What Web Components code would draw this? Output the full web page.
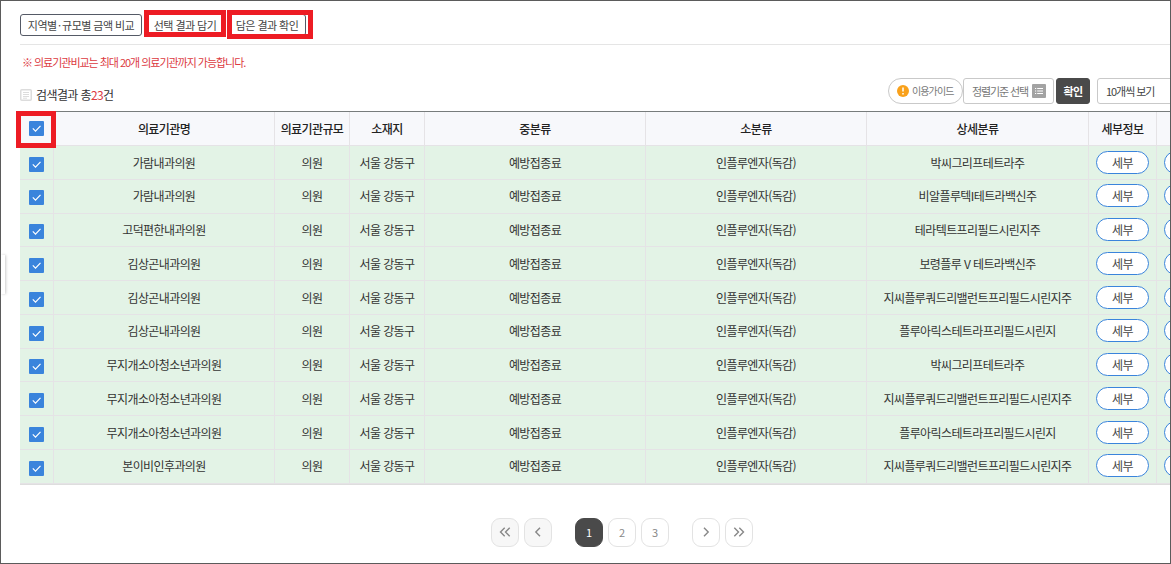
<!DOCTYPE html>
<html lang="ko">
<head>
<meta charset="utf-8">
<title>의료기관 비교</title>
<style>
    body {
        margin: 0;
        font-family: "Noto Sans CJK KR", sans-serif;
        font-size: 12px;
        letter-spacing: -.6px;
        color: #333;
    }
    .dot { margin: 0 1.5px; }
</style>
</head>
<body>
<app-frame>
    <side-tab></side-tab>
    <action-bar>
        <line-button style="width: 122px">지역별<span class="dot">·</span>규모별 금액 비교</line-button>
        <line-button style="width: 79px" marked>선택 결과 담기</line-button>
        <line-button style="width: 79px" marked="tall">담은 결과 확인</line-button>
    </action-bar>
    <notice-text>※ 의료기관비교는 최대 20개 의료기관까지 가능합니다.</notice-text>
    <result-bar total="23"></result-bar>
    <price-table></price-table>
    <page-nav current="1" pages="3"></page-nav>
</app-frame>

<script>
const define = (name, html, setup) => customElements.define(name, class extends HTMLElement {
    constructor() {
        super();
        this.attachShadow({ mode: 'open' });
        this.shadowRoot.innerHTML = html;
    }
    connectedCallback() {
        if (setup) setup(this, this.shadowRoot);
    }
});

define('app-frame', `
    <style>
        :host {
            display: flex;
            flex-direction: column;
            box-sizing: border-box;
            position: relative;
            width: 1171px;
            height: 564px;
            padding-left: 19px;
            border: 1px solid #5b5b5b;
            background: #fff;
            overflow: hidden;
        }
    </style>
    <slot></slot>
`);

define('side-tab', `
    <style>
        :host {
            position: absolute;
            left: 0;
            top: 254px;
            width: 4px;
            height: 39px;
            background: #fff;
            box-shadow: 1px 0 3px rgba(0, 0, 0, .2);
        }
    </style>
`);

define('action-bar', `
    <style>
        :host {
            display: flex;
            flex: none;
            align-items: flex-start;
            box-sizing: border-box;
            height: 44px;
            gap: 3px;
            padding-top: 13px;
            border-bottom: 1px solid #e5e5e5;
        }
    </style>
    <slot></slot>
`);

define('line-button', `
    <style>
        :host {
            display: block;
            position: relative;
            box-sizing: border-box;
            height: 22px;
            border: 1px solid #555a66;
            border-radius: 3px;
            line-height: 20px;
            font-size: 11px;
            letter-spacing: -.55px;
            text-align: center;
            white-space: nowrap;
            color: #444;
        }
        :host([marked]) { text-indent: 1px; }
        i { display: none; }
        :host([marked]) i {
            display: block;
            position: absolute;
            box-sizing: border-box;
            left: -2px;
            top: -5px;
            width: 82px;
            height: 27px;
            border: 5px solid #ed1c24;
        }
        :host([marked=tall]) i {
            width: 86px;
            height: 29px;
            left: -1px;
        }
    </style>
    <slot></slot><i></i>
`);

define('notice-text', `
    <style>
        :host {
            display: block;
            flex: none;
            height: 33px;
            padding-left: 2px;
            line-height: 34px;
            font-size: 11px;
            letter-spacing: -1.03px;
            color: #dc3a3f;
        }
    </style>
    <slot></slot>
`);

define('result-bar', `
    <style>
        :host {
            display: flex;
            flex: none;
            height: 33px;
            width: 1300px;
        }
        .count {
            display: flex;
            align-items: center;
            gap: 4px;
            width: 868px;
            height: 34px;
        }
        .count span { padding-bottom: 2px; }
        .count b { font-weight: 400; color: #dc3a3f; }
        .box {
            display: flex;
            align-items: center;
            box-sizing: border-box;
            height: 26px;
            border: 1px solid #c9c9c9;
            border-radius: 3px;
            white-space: nowrap;
            font-size: 11px;
            color: #777;
        }
        .box span { padding-bottom: 1px; }
        .guide {
            width: 75px;
            padding-left: 8px;
            gap: 3px;
            border-radius: 13px;
            font-size: 10px;
            letter-spacing: -.9px;
        }
        .sort {
            width: 91px;
            padding-left: 8px;
            gap: 4px;
            letter-spacing: -1.1px;
        }
        .ok {
            width: 34px;
            margin: 0 7px 0 2px;
            justify-content: center;
            border-color: #4a4a4a;
            background: #4a4a4a;
            font-weight: 700;
            color: #fff;
        }
        .size {
            width: 110px;
            padding-left: 8px;
            letter-spacing: -1.05px;
            color: #444;
        }
    </style>
    <div class="count">
        <svg width="12" height="12" viewBox="0 0 12 12" fill="none" stroke="#dcdcdc">
            <rect x=".75" y=".75" width="10.5" height="10.5" rx="1" stroke-width="1.5"/>
            <path d="M3 3.5h6M3 5.5h6M3 7.5h6M3 9.2h4"/>
        </svg>
        <span>검색결과 총<b></b>건</span>
    </div>
    <div class="box guide">
        <svg width="12" height="12" viewBox="0 0 12 12">
            <circle cx="6" cy="6" r="6" fill="#f9a11b"/>
            <path d="M6 2.6v4M6 8v1.4" stroke="#fff" stroke-width="1.5"/>
        </svg>
        <span>이용가이드</span>
    </div>
    <div class="box sort">
        <span>정렬기준 선택</span>
        <svg width="14" height="14" viewBox="0 0 14 14">
            <rect width="14" height="14" rx="1" fill="#a3a3a3"/>
            <path d="M3 4.5h1.2M5.2 4.5H11M3 7h1.2M5.2 7H11M3 9.5h1.2M5.2 9.5H11" stroke="#fff"/>
        </svg>
    </div>
    <div class="box ok"><span>확인</span></div>
    <div class="box size"><span>10개씩 보기</span></div>
`, (el, root) => {
    root.querySelector('b').textContent = el.getAttribute('total');
});

define('check-box', `
    <style>
        :host {
            display: block;
            width: 15px;
            height: 15px;
            border-radius: 1px;
            background: #3a84dc;
        }
        svg { display: block; }
    </style>
    <svg width="15" height="15" viewBox="0 0 15 15" fill="none" stroke="#fff" stroke-width="1.2">
        <path d="M3.8 7.4l2.7 2.7 5-5.3"/>
    </svg>
`);

define('pill-button', `
    <style>
        :host {
            display: block;
            flex: none;
            box-sizing: border-box;
            width: 53px;
            height: 23px;
            border: 1px solid #3a84dc;
            border-radius: 12px;
            background: #fff;
            line-height: 21px;
            text-align: center;
            color: #444;
        }
    </style>
    <slot></slot>
`);

const heads = ['의료기관명', '의료기관규모', '소재지', '중분류', '소분류', '상세분류', '세부정보'];

// [의료기관명, 상세분류]; the other columns are the same in every row
const items = [
    ['가람내과의원', '박씨그리프테트라주'],
    ['가람내과의원', '비알플루텍I테트라백신주'],
    ['고덕편한내과의원', '테라텍트프리필드시린지주'],
    ['김상곤내과의원', '보령플루 V 테트라백신주'],
    ['김상곤내과의원', '지씨플루쿼드리밸런트프리필드시린지주'],
    ['김상곤내과의원', '플루아릭스테트라프리필드시린지'],
    ['무지개소아청소년과의원', '박씨그리프테트라주'],
    ['무지개소아청소년과의원', '지씨플루쿼드리밸런트프리필드시린지주'],
    ['무지개소아청소년과의원', '플루아릭스테트라프리필드시린지'],
    ['본이비인후과의원', '지씨플루쿼드리밸런트프리필드시린지주']
];

define('price-table', `
    <style>
        :host {
            display: block;
            flex: none;
            width: 1250px;
            border-top: 1px solid #777c7c;
            border-bottom: 1px solid #dedede;
        }
        .row {
            display: grid;
            grid-template-columns: 34px 221px 75px 75px 221px 221px 222px 68px 113px;
            height: 33.78px;
            background: #e3f3e6;
            color: #333;
        }
        .head {
            position: relative;
            height: 34px;
            background: #f7f8fb;
            font-weight: 500;
            color: #222;
        }
        .row > div {
            display: flex;
            align-items: center;
            justify-content: center;
            box-sizing: border-box;
            padding-bottom: .6px;
            border-right: 1px solid #e5e3e6;
            border-bottom: 1px solid #e5e3e6;
            white-space: nowrap;
        }
        .head > div { padding-bottom: 0; }
        .row > div:last-child { justify-content: flex-start; padding-left: 7px; }
        .row check-box { margin-top: 4.2px; }
        .head check-box { margin-top: 0; }
        .mark {
            position: absolute;
            box-sizing: border-box;
            left: -4px;
            top: -1px;
            width: 40px;
            height: 37px;
            border: 5px solid #ed1c24;
        }
    </style>
    <div class="table"></div>
`, (el, root) => {
    const row = (cells, cls = '') => `<div class="row ${cls}">${
        cells.map(c => `<div>${c}</div>`).join('')
    }${cls ? '<i class="mark"></i>' : ''}</div>`;
    const check = '<check-box></check-box>';
    const pill = '<pill-button>세부</pill-button>';

    root.querySelector('.table').innerHTML =
        row([check, ...heads, ''], 'head') +
        items.map(([name, detail]) => row([
            check, name, '의원', '서울 강동구', '예방접종료', '인플루엔자(독감)', detail, pill, '<pill-button></pill-button>'
        ])).join('');
});

define('page-nav', `
    <style>
        :host {
            display: flex;
            gap: 23px;
            padding: 33px 0 0 471px;
            letter-spacing: 0;
        }
        .group { display: flex; gap: 5px; }
        .group > * {
            display: flex;
            align-items: center;
            justify-content: center;
            box-sizing: border-box;
            width: 28px;
            height: 29px;
            border: 1px solid #e3e3e3;
            border-radius: 9px;
            font-size: 11px;
            color: #888;
        }
        .off { background: #f7f7f7; }
        .group > .on { border-color: #4a4a4a; background: #4a4a4a; color: #fff; }
        svg { fill: none; stroke: #888; stroke-width: 1.4; }
    </style>
    <div class="group">
        <span class="off"><svg width="12" height="12"><path d="M5.7 1.7L1.5 6l4.2 4.3M10.7 1.7L6.5 6l4.2 4.3"/></svg></span>
        <span class="off"><svg width="12" height="12"><path d="M8 1.7L3.8 6 8 10.3"/></svg></span>
    </div>
    <div class="group pages"></div>
    <div class="group">
        <span><svg width="12" height="12"><path d="M4 1.7L8.2 6 4 10.3"/></svg></span>
        <span><svg width="12" height="12"><path d="M1.3 1.7L5.5 6l-4.2 4.3M6.3 1.7L10.5 6l-4.2 4.3"/></svg></span>
    </div>
`, (el, root) => {
    const current = +el.getAttribute('current');
    const pages = +el.getAttribute('pages');
    let html = '';
    for (let i = 1; i <= pages; i++) {
        html += `<span class="${i === current ? 'on' : ''}">${i}</span>`;
    }
    root.querySelector('.pages').innerHTML = html;
});
</script>
</body>
</html>
